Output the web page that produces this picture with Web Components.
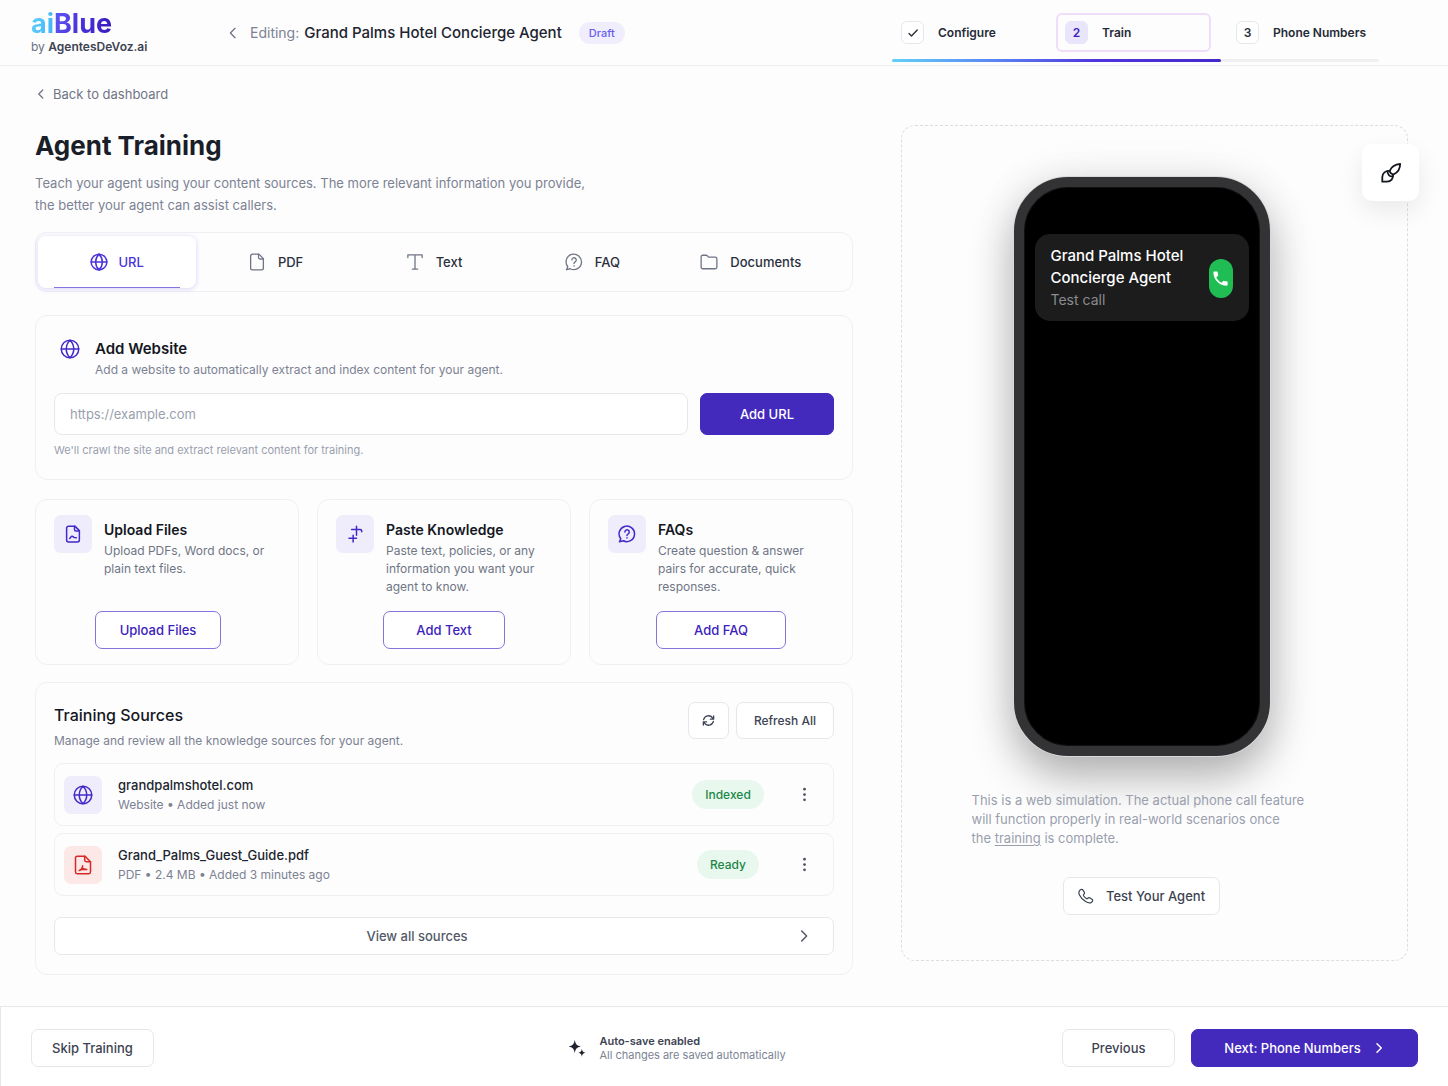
<!DOCTYPE html>
<html lang="en">
<head>
<meta charset="utf-8">
<meta name="viewport" content="width=device-width, initial-scale=1">
<title>Agent Training</title>
<style>
  :root {
    --ink: #1b1f2a;
    --text: #3d4352;
    --muted: #7c8293;
    --faint: #9a9fae;
    --line: #eff0f3;
    --line-strong: #e6e7eb;
    --brand: #4429bd;
    --brand-tint: #efecfb;
    --page: #fdfdfd;
  }
  * { box-sizing: border-box; }
  body {
    margin: 0;
    background: var(--page);
    color: var(--ink);
    font: 400 13px/18px Inter, "Liberation Sans", sans-serif;
  }
</style>
</head>
<body>
<training-page></training-page>

<script>
const BASE = `
  *, *::before, *::after { box-sizing: border-box; }
  h1, h2, h3, p { margin: 0; }
  button, input { font: inherit; color: inherit; margin: 0; }
  button { cursor: pointer; }
`;

function define(name, css, html) {
  const template = document.createElement('template');
  template.innerHTML = `<style>${BASE}${css}</style>${html}`;
  customElements.define(name, class extends HTMLElement {
    constructor() {
      super();
      this.attachShadow({ mode: 'open' }).append(template.content.cloneNode(true));
    }
  });
}

const ICONS = {
  globe: '<circle cx="12" cy="12" r="10.5"/><path d="M1.5 12h21M12 1.5c-6 6-6 15 0 21M12 1.5c6 6 6 15 0 21"/>',
  file: '<path d="M14.5 1.5H6A2.5 2.5 0 0 0 3.5 4v16A2.5 2.5 0 0 0 6 22.5h12a2.5 2.5 0 0 0 2.5-2.5V7.5z"/><path d="M14 1.5V6a2 2 0 0 0 2 2h4.500"/>',
  upload: '<path d="M14.5 1.5H6A2.5 2.5 0 0 0 3.5 4v16A2.5 2.5 0 0 0 6 22.5h12a2.5 2.5 0 0 0 2.5-2.5V7.5z"/><path d="M14 1.5V6a2 2 0 0 0 2 2h4.5M7.5 18c1-.5 1.5-2.5 3-3s2 1.5 3.2 1.7l2.8.3"/>',
  pdf: '<path d="M14.5 1.5H5A2 2 0 0 0 3 3.500v17a2 2 0 0 0 2 2h14a2 2 0 0 0 2-2V8z"/><path d="M14 1.5V6a2 2 0 0 0 2 2h5M7.500 18.5c2.500-.8 4-3 4-5.500M11.300 15.500c1 1.500 3 2 5.200 1.800M8 18.300c2-1 4.500-1.300 8.500-1"/>',
  type: '<path d="M2.500 6V2.500h19V6M12 2.500v19M8.500 21.500h7"/>',
  faq: '<path d="M3.700 18.300A10.300 10.300 0 1 1 7 21l-5 1.300z"/><path d="M9.200 9.200a2.900 2.900 0 1 1 4.300 2.600c-1 .5-1.500 1-1.500 2.100M12 17v.3"/>',
  folder: '<path d="M1.500 5A2 2 0 0 1 3.500 3h4.700a2 2 0 0 1 1.500.700L11.500 5.500h9a2 2 0 0 1 2 2V19a2 2 0 0 1-2 2h-17a2 2 0 0 1-2-2z"/>',
  paste: '<path d="M14 1.500v12M7.500 6H19c1.300 0 2 .8 2 3M9.500 13.500v9M4 17.500h10"/>',
  refresh: '<path d="M3 10.500A9.300 9.300 0 0 1 19.500 7l2 2.500M21.500 3.500v6h-6M21 13.500A9.300 9.300 0 0 1 4.500 17l-2-2.500M2.500 20.500v-6h6"/>',
  dots: '<g fill="currentColor" stroke="none"><circle cx="12" cy="3.500" r="2.200"/><circle cx="12" cy="12" r="2.200"/><circle cx="12" cy="20.500" r="2.200"/></g>',
  left: '<path d="M15.500 4 7.500 12l8 8"/>',
  right: '<path d="M8 3.500 16.500 12 8 20.500"/>',
  check: '<path d="m4 13 5 5L20.500 6"/>',
  phone: '<path d="M2.200 4.200C4 1.600 6.300 1.300 7.500 3.200l1.800 2.900c.8 1.300.4 2.500-.6 3.400-.9.800-.8 1.500-.1 2.500 1 1.500 2.200 2.700 3.700 3.600 1 .6 1.700.6 2.400-.2.9-1 2.100-1.300 3.400-.5l2.800 1.800c1.800 1.200 1.500 3.300-1 5-2.200 1.500-5.500.600-9.500-2.200C6 16.500 3.800 14 2.200 10.500 1 8 1 6 2.200 4.200z"/>',
  call: '<path fill="currentColor" stroke="none" d="M6.600 10.800c1.400 2.800 3.800 5.100 6.600 6.600l2.200-2.200c.3-.3.700-.4 1-.2 1.100.4 2.300.6 3.600.6.600 0 1 .4 1 1V20c0 .6-.4 1-1 1C10.600 21 3 13.400 3 4c0-.6.4-1 1-1h3.500c.6 0 1 .4 1 1 0 1.300.2 2.500.6 3.600.1.300 0 .7-.2 1z"/>',
  brush: '<path d="M22 2c-5 .5-9.700 3.600-11.300 7.300-.4 1 .1 1.900 1 2.700l.8.7c.9.800 1.800 1.200 2.700.7C19 11.500 22 7 22 2z"/><path d="M10.800 9.800C6 9.300 2.500 12 2.500 16.500v5h5c4.500 0 7.300-3.500 6.700-8"/><path d="M8.300 10c-.6 3 2.400 6.300 5.600 5.700"/>',
  sparkles: '<path fill="currentColor" stroke="none" d="M9 1c1 6 2.500 7.700 8 9-5.500 1.300-7 3-8 9-1-6-2.500-7.700-8-9 5.500-1.300 7-3 8-9zM18.500 13c.6 3.500 1.500 4.600 4.700 5.300-3.200.7-4.100 1.800-4.700 5.200-.6-3.400-1.500-4.500-4.700-5.200 3.200-.7 4.100-1.800 4.700-5.300z"/>'
};

customElements.define('ui-icon', class extends HTMLElement {
  connectedCallback() {
    if (this.shadowRoot) return;
    const size = this.getAttribute('size') || 18;
    const weight = (this.getAttribute('weight') || 1.5) * 24 / size;
    this.attachShadow({ mode: 'open' }).innerHTML = `
      <style>:host { display: inline-flex; flex: none; } svg { display: block; }</style>
      <svg width="${size}" height="${size}" viewBox="0 0 24 24" fill="none" stroke="currentColor" stroke-width="${weight}"
        stroke-linecap="round" stroke-linejoin="round" aria-hidden="true">${ICONS[this.getAttribute('name')]}</svg>`;
  }
});

define('ui-button', `
  :host { display: inline-flex; }
  button {
    flex: 1; display: flex; align-items: center; justify-content: center; gap: 12px;
    min-height: 38px; padding: 0 20px; border: 1px solid var(--line-strong); border-radius: 7px;
    background: #fff; color: var(--text); font-weight: 500; white-space: nowrap;
  }
  :host([kind="primary"]) button { background: var(--brand); border-color: var(--brand); color: #fff; }
  :host([kind="outline"]) button { border-color: #8673dc; color: #3c22bd; }
  :host([kind="tall"]) button { min-height: 42px; background: var(--brand); border-color: var(--brand); color: #fff; padding: 0 39px; }
  :host([kind="compact"]) button { padding: 0 14px; }
  :host([kind="small"]) button { min-height: 37px; font-size: 12px; padding: 0 17px; }
  :host([kind="square"]) button { min-height: 37px; padding: 0 13px; }
`, `<button type="button"><slot></slot></button>`);

define('brand-logo', `
  :host { display: block; }
  .word { font-size: 27px; line-height: 32px; font-weight: 700; }
  .word span { background: linear-gradient(105deg, #62d3fb, #3fb0f8); -webkit-background-clip: text; background-clip: text; color: transparent; }
  .word .blue { background-image: linear-gradient(110deg, #5f5cf7, #4a33dc 45%, #3717b8); }
  .by { font-size: 12px; line-height: 14px; color: #6a7080; }
  .by b { font-weight: 600; color: var(--text); }
`, `<div class="word"><span>ai</span><span class="blue">Blue</span></div>
    <div class="by">by <b>AgentesDeVoz.ai</b></div>`);

define('step-item', `
  :host {
    display: flex; align-items: center; gap: 14px; height: 39px; padding: 0 7px;
    border: 2px solid transparent; border-radius: 6px;
    font-size: 12px; font-weight: 600; color: #262b38; white-space: nowrap;
  }
  .mark {
    display: flex; align-items: center; justify-content: center; width: 23px; height: 23px;
    border: 1px solid var(--line-strong); border-radius: 6px; background: #fff;
  }
  :host([current]) { border-color: #f0dcfb; }
  :host([current]) .mark { background: #e9e5fa; border-color: #e9e5fa; color: #3c22bd; }
`, `<span class="mark"><slot name="mark"></slot></span><slot></slot>`);

define('step-progress', `
  :host { display: block; width: 487px; }
  .steps { display: grid; grid-template-columns: 148fr 155fr 152fr; gap: 16px; }
  .bar { height: 3px; margin-top: 7px; border-radius: 2px; background: #f0f0f2; }
  .bar i { display: block; width: 67.6%; height: 100%; border-radius: 2px; background: linear-gradient(90deg, #62d0f7, #5b8df5 28%, #4f35dc 62%, #4429c9); }
`, `<div class="steps">
      <step-item><ui-icon slot="mark" name="check" size="12" weight="1.3"></ui-icon>Configure</step-item>
      <step-item current><span slot="mark">2</span>Train</step-item>
      <step-item><span slot="mark">3</span>Phone Numbers</step-item>
    </div>
    <div class="bar"><i></i></div>`);

define('app-header', `
  :host {
    display: flex; align-items: center; min-height: 66px; padding: 0 69px 0 31px;
    border-bottom: 1px solid #edeef1;
  }
  brand-logo { width: 195px; padding-bottom: 3px; }
  .title { flex: 1; display: flex; align-items: center; font-size: 15px; line-height: 22px; white-space: nowrap; }
  a { display: flex; color: #6f7585; margin-right: 10px; }
  .label { font-size: 14px; color: var(--muted); margin-right: 5px; }
  h2 { font: inherit; font-weight: 500; color: #20242f; }
  .draft { margin-left: 17px; padding: 0 10px; border-radius: 11px; background: #f0eefc; color: #6a5cf0; font-size: 11px; font-weight: 500; }
  step-progress { padding-top: 10px; }
`, `<brand-logo></brand-logo>
    <div class="title">
      <a href="#agents" aria-label="Back to agents"><ui-icon name="left" size="14" weight="1.3"></ui-icon></a>
      <span class="label">Editing:</span>
      <h2>Grand Palms Hotel Concierge Agent</h2>
      <span class="draft">Draft</span>
    </div>
    <step-progress></step-progress>`);

define('source-tab', `
  :host { display: flex; }
  button {
    flex: 1; position: relative; display: flex; align-items: center; justify-content: center; gap: 12px;
    height: 52px; padding: 0; border: 0; border-radius: 8px; background: none; color: #6f7585; font-weight: 500;
  }
  span { color: #2b303d; }
  :host([active]) button { gap: 10px; background: #fff; color: #4a33dc; box-shadow: 0 1px 4px 1px rgba(110, 85, 230, .18); }
  :host([active]) span { color: #4a33dc; }
  :host([active]) button::after {
    content: ""; position: absolute; left: 16px; right: 16px; bottom: 0; height: 1px; background: #8672e0;
  }
`, `<button type="button" role="tab"><slot name="icon"></slot><span><slot></slot></span></button>`);

define('source-tabs', `
  :host { display: block; padding: 3px 22px 3px 2px; border: 1px solid var(--line); border-radius: 12px; }
  div { display: grid; grid-template-columns: repeat(5, 1fr); }
`, `<div role="tablist" aria-label="Source types">
      <source-tab active><ui-icon slot="icon" name="globe"></ui-icon>URL</source-tab>
      <source-tab><ui-icon slot="icon" name="file" weight="1.3"></ui-icon>PDF</source-tab>
      <source-tab><ui-icon slot="icon" name="type" weight="1.3"></ui-icon>Text</source-tab>
      <source-tab><ui-icon slot="icon" name="faq" weight="1.3"></ui-icon>FAQ</source-tab>
      <source-tab><ui-icon slot="icon" name="folder" weight="1.3"></ui-icon>Documents</source-tab>
    </div>`);

define('website-card', `
  :host { display: block; padding: 22px 18px 21px; border: 1px solid var(--line); border-radius: 12px; }
  .head { display: grid; grid-template-columns: 32px 1fr; column-gap: 9px; row-gap: 1px; }
  ui-icon { color: #4429c9; justify-self: center; align-self: center; }
  label { font-size: 15px; line-height: 22px; font-weight: 600; color: #14171f; }
  p { font-size: 12px; line-height: 18px; color: var(--muted); }
  .head p { grid-column: 2; }
  .row { display: flex; gap: 12px; margin-top: 14px; }
  input {
    flex: 1; min-width: 0; height: 42px; padding: 0 15px; border: 1px solid var(--line-strong);
    border-radius: 8px; background: #fff;
  }
  input::placeholder { color: var(--faint); opacity: 1; }
  .hint { margin-top: 7px; font-size: 11px; line-height: 16px; color: var(--faint); }
`, `<div class="head">
      <ui-icon name="globe" size="20"></ui-icon>
      <label for="site">Add Website</label>
      <p>Add a website to automatically extract and index content for your agent.</p>
    </div>
    <div class="row">
      <input id="site" type="url" placeholder="https://example.com">
      <ui-button kind="tall">Add URL</ui-button>
    </div>
    <p class="hint">We'll crawl the site and extract relevant content for training.</p>`);

define('icon-tile', `
  :host {
    display: flex; align-items: center; justify-content: center; flex: none; width: 38px; height: 38px;
    border-radius: 7px; background: var(--tile, var(--brand-tint)); color: var(--tile-ink, #4429c9);
  }
`, `<slot></slot>`);

define('feature-card', `
  :host {
    display: flex; flex-direction: column; justify-content: space-between; gap: 14px;
    padding: 15px 18px; border: 1px solid var(--line); border-radius: 12px;
  }
  .top { display: flex; gap: 12px; }
  .copy { padding-top: 5px; }
  h3 { font-size: 14px; line-height: 20px; font-weight: 600; color: #14171f; }
  p { margin-top: 2px; font-size: 12px; line-height: 18px; color: #6f7585; }
  .action { display: flex; justify-content: center; padding-right: var(--action-inset, 0px); }
`, `<div class="top">
      <icon-tile><slot name="icon"></slot></icon-tile>
      <div class="copy"><h3><slot name="title"></slot></h3><p><slot></slot></p></div>
    </div>
    <div class="action"><slot name="action"></slot></div>`);

define('source-row', `
  :host {
    display: flex; align-items: center; gap: 16px; height: 63px; padding: 0 15px 0 9px;
    border: 1px solid var(--line); border-radius: 9px;
  }
  :host([type="pdf"]) { --tile: #fde8e8; --tile-ink: #d92727; }
  .copy { flex: 1; min-width: 0; line-height: 19px; }
  .name { font-weight: 500; color: #20242f; }
  .meta { font-size: 12px; color: var(--muted); }
  .state { display: flex; justify-content: center; width: 76px; margin-right: 8px; }
  .state span { padding: 0 13px; border-radius: 15px; background: #e9f8ef; color: #1c8746; font-size: 12px; line-height: 29px; font-weight: 500; }
  button { display: flex; align-items: center; justify-content: center; width: 28px; height: 28px; padding: 0; border: 0; background: none; color: #4c5261; }
`, `<icon-tile><slot name="icon"></slot></icon-tile>
    <div class="copy"><div class="name"><slot name="name"></slot></div><div class="meta"><slot></slot></div></div>
    <div class="state"><span><slot name="state"></slot></span></div>
    <button type="button" aria-label="More actions"><ui-icon name="dots" size="15"></ui-icon></button>`);

define('sources-card', `
  :host { display: block; padding: 19px 18px; border: 1px solid var(--line); border-radius: 12px; }
  .head { display: flex; align-items: flex-start; gap: 7px; }
  .copy { flex: 1; }
  h2 { font-size: 16px; line-height: 26px; font-weight: 500; color: #14171f; }
  p { margin-top: 4px; font-size: 12px; line-height: 18px; color: var(--muted); }
  .rows { display: grid; gap: 7px; margin: 13px 0 21px; }
  .all {
    display: flex; align-items: center; height: 38px; padding: 0 22px; border: 1px solid var(--line-strong);
    border-radius: 7px; background: #fff; color: #535968; font-weight: 500; text-decoration: none;
  }
  .all span { flex: 1; padding-right: 40px; text-align: center; }
`, `<div class="head">
      <div class="copy">
        <h2>Training Sources</h2>
        <p>Manage and review all the knowledge sources for your agent.</p>
      </div>
      <ui-button kind="square"><ui-icon name="refresh" size="13" weight="1.3"></ui-icon></ui-button>
      <ui-button kind="small">Refresh All</ui-button>
    </div>
    <div class="rows">
      <source-row>
        <ui-icon slot="icon" name="globe" size="20"></ui-icon>
        <span slot="name">grandpalmshotel.com</span>Website • Added just now<span slot="state">Indexed</span>
      </source-row>
      <source-row type="pdf">
        <ui-icon slot="icon" name="pdf" size="20"></ui-icon>
        <span slot="name">Grand_Palms_Guest_Guide.pdf</span>PDF • 2.4 MB • Added 3 minutes ago<span slot="state">Ready</span>
      </source-row>
    </div>
    <a class="all" href="#sources"><span>View all sources</span><ui-icon name="right" size="14"></ui-icon></a>`);

define('phone-preview', `
  :host {
    display: block; width: 256px; height: 579px; padding: 47px 11px; border: 10px solid #333335; border-radius: 54px;
    background: #000; box-shadow: inset 0 0 0 1px #111, 0 0 0 1px #d9d9db, 0 20px 44px rgba(0, 0, 0, .3), 0 0 50px rgba(0, 0, 0, .06);
  }
  .call {
    display: flex; align-items: center; justify-content: space-between; padding: 11px 16px 10px;
    border-radius: 15px; background: #1c1c1d; color: #fff; font-size: 15px; line-height: 22px; font-weight: 500;
  }
  .call div div { font-size: 14px; font-weight: 400; color: #8b8b8f; }
  button { display: flex; align-items: center; justify-content: center; width: 24px; height: 39px; padding: 0; border: 0; border-radius: 12px; background: #20bd55; color: #fff; }
`, `<div class="call">
      <div>Grand Palms Hotel<br>Concierge Agent<div>Test call</div></div>
      <button type="button" aria-label="Start test call"><ui-icon name="call" size="19"></ui-icon></button>
    </div>`);

define('preview-panel', `
  :host {
    position: relative; display: flex; flex-direction: column; align-items: center;
    padding: 51px 26px 45px 0; border: 1px dashed #dcdde1; border-radius: 14px;
  }
  p { width: 340px; margin: 35px 0 29px; line-height: 19px; color: var(--faint); }
  p a { color: inherit; text-underline-offset: 2px; }
  .theme {
    position: absolute; top: 18px; right: -12px; display: flex; align-items: center; justify-content: center;
    width: 57px; height: 57px; padding: 0; border: 0; border-radius: 10px; background: #fff; color: #14171f;
    box-shadow: 0 10px 24px rgba(0, 0, 0, .08);
  }
`, `<phone-preview></phone-preview>
    <p>This is a web simulation. The actual phone call feature<br>will function properly in real-world scenarios once<br>the <a href="#training">training</a> is complete.</p>
    <ui-button kind="compact"><ui-icon name="phone" size="16" weight="1.2"></ui-icon>Test Your Agent</ui-button>
    <button class="theme" type="button" aria-label="Customize appearance"><ui-icon name="brush" size="22" weight="1.8"></ui-icon></button>`);

define('app-footer', `
  :host { display: flex; align-items: center; min-height: 80px; padding: 3px 30px 0; border-top: 1px solid var(--line-strong); border-left: 1px solid var(--line-strong); background: #fff; }
  .start { flex: 3 1 auto; display: flex; }
  .saved { display: flex; align-items: center; gap: 13px; font-size: 11px; line-height: 14px; color: var(--muted); white-space: nowrap; }
  .saved ui-icon { color: #20242f; }
  b { display: block; font-weight: 600; color: var(--text); }
  .end { flex: 2 1 auto; display: flex; justify-content: flex-end; gap: 16px; }
  .previous { min-width: 113px; }
  .next { min-width: 227px; }
`, `<div class="start"><ui-button>Skip Training</ui-button></div>
    <div class="saved"><ui-icon name="sparkles" size="18"></ui-icon><div><b>Auto-save enabled</b>All changes are saved automatically</div></div>
    <div class="end">
      <ui-button class="previous">Previous</ui-button>
      <ui-button class="next" kind="primary">Next: Phone Numbers<ui-icon name="right" size="12"></ui-icon></ui-button>
    </div>`);

define('training-page', `
  :host { display: flex; flex-direction: column; min-height: 100vh; }
  main { flex: 1; padding: 18px 40px 31px 35px; }
  .back { display: inline-flex; align-items: center; gap: 6px; line-height: 20px; color: #6f7585; text-decoration: none; }
  .columns { display: grid; grid-template-columns: 818fr 507fr; gap: 48px; align-items: start; margin-top: 21px; }
  h1 { font-size: 26px; line-height: 42px; font-weight: 700; color: #1a1e29; }
  .lead { margin-top: 5px; line-height: 22px; color: var(--muted); }
  source-tabs { margin-top: 16px; }
  website-card { margin-top: 23px; }
  .features { display: grid; grid-template-columns: 264fr 254fr 264fr; gap: 18px; margin-top: 19px; }
  feature-card { min-height: 166px; }
  sources-card { margin-top: 17px; }
  .upload { --action-inset: 18px; }
  .upload ui-button { min-width: 126px; }
  .text ui-button { min-width: 122px; }
  .faqs ui-button { min-width: 130px; }
`, `<app-header></app-header>
    <main>
      <a class="back" href="#dashboard"><ui-icon name="left" size="12" weight="1.3"></ui-icon>Back to dashboard</a>
      <div class="columns">
        <section>
          <h1>Agent Training</h1>
          <p class="lead">Teach your agent using your content sources. The more relevant information you provide,<br>the better your agent can assist callers.</p>
          <source-tabs></source-tabs>
          <website-card></website-card>
          <div class="features">
            <feature-card class="upload">
              <ui-icon slot="icon" name="upload"></ui-icon>
              <span slot="title">Upload Files</span>Upload PDFs, Word docs, or<br>plain text files.
              <ui-button slot="action" kind="outline">Upload Files</ui-button>
            </feature-card>
            <feature-card class="text">
              <ui-icon slot="icon" name="paste"></ui-icon>
              <span slot="title">Paste Knowledge</span>Paste text, policies, or any<br>information you want your<br>agent to know.
              <ui-button slot="action" kind="outline">Add Text</ui-button>
            </feature-card>
            <feature-card class="faqs">
              <ui-icon slot="icon" name="faq"></ui-icon>
              <span slot="title">FAQs</span>Create question &amp; answer<br>pairs for accurate, quick<br>responses.
              <ui-button slot="action" kind="outline">Add FAQ</ui-button>
            </feature-card>
          </div>
          <sources-card></sources-card>
        </section>
        <preview-panel></preview-panel>
      </div>
    </main>
    <app-footer></app-footer>`);
</script>
</body>
</html>
